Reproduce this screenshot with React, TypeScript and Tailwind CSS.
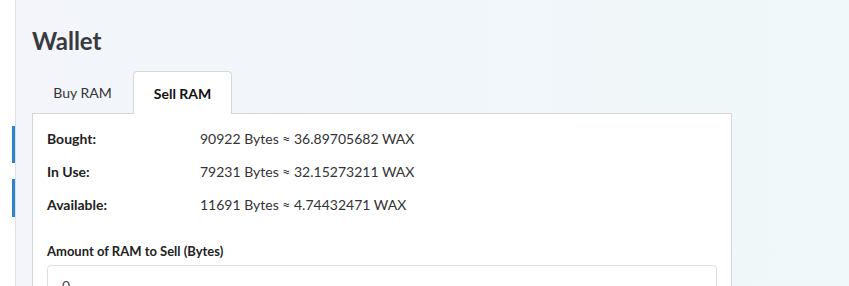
// App.tsx
// Wallet — Sell RAM tab of the resource panel

const rows = [
  { label: 'Bought:', value: '90922 Bytes ≈ 36.89705682 WAX' },
  { label: 'In Use:', value: '79231 Bytes ≈ 32.15273211 WAX' },
  { label: 'Available:', value: '11691 Bytes ≈ 4.74432471 WAX' },
];

export default function App() {
  return (
    <div
      className="flex h-[286px] w-full overflow-hidden bg-gradient-to-r from-[#f3f5fb] to-[#f0f8f9] text-[#222]"
      style={{ fontFamily: 'Lato, "Noto Sans", sans-serif' }}
    >
      {/* Sidebar edge with active markers */}
      <div className="flex w-[16px] shrink-0 flex-col items-end border-r border-[#dcdfe3] bg-white">
        <div className="mt-[126px] h-[37px] w-[3px] bg-[#2d83c9]" />
        <div className="mt-[16px] h-[38px] w-[3px] bg-[#2d83c9]" />
      </div>

      <div className="flex flex-col pl-[16px] pt-[26px]">
        <h1 className="text-[24px] font-bold leading-[30px] text-[#383a3d]">Wallet</h1>

        {/* Tabs */}
        <div className="mt-[15px] flex">
          <button className="h-[42px] w-[101px] text-[14px] text-[#333]">Buy RAM</button>
          <button className="relative -mb-px h-[43px] w-[99px] rounded-t-[4px] border border-b-0 border-[#d6d9dc] bg-white text-[14px] font-bold text-[#111]">
            Sell RAM
          </button>
        </div>

        {/* Panel */}
        <div className="w-[700px] border border-[#d3d6d9] bg-white px-[14px] pt-[8px]">
          <div className="flex flex-col">
            {rows.map((r) => (
              <div key={r.label} className="flex h-[33px] items-center">
                <span className="w-[153px] text-[14px] font-bold text-[#222]">{r.label}</span>
                <span className="text-[14px] text-[#333]">{r.value}</span>
              </div>
            ))}
          </div>
          <label className="mt-[22px] block text-[13px] font-bold leading-[16px] text-[#222]">
            Amount of RAM to Sell (Bytes)
          </label>
          <div className="mt-[6px] h-[38px] rounded-[4px] border border-[#dcdfe2] px-[14px] pt-[9px] text-[14px] text-[#444]">
            0
          </div>
        </div>
      </div>
    </div>
  );
}
